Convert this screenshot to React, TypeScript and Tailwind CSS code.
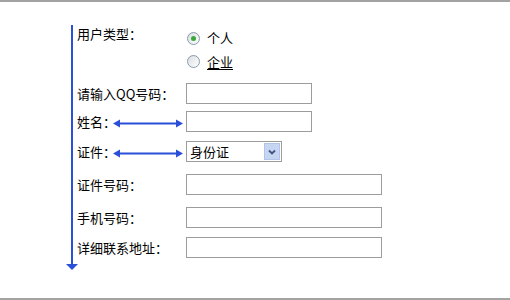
import React from 'react';

const font = { fontFamily: '"Noto Sans CJK SC", "Noto Sans", sans-serif' };

function HArrow() {
  // double-headed annotation arrow between label and field
  return (
    <svg width="70" height="9" viewBox="0 0 70 9" className="-ml-[3px] translate-y-[2px]">
      <line x1="5" y1="4.5" x2="65" y2="4.5" stroke="#2a4fd8" strokeWidth="2" />
      <polygon points="0,4.5 7,0.5 7,8.5" fill="#2a4fd8" />
      <polygon points="70,4.5 63,0.5 63,8.5" fill="#2a4fd8" />
    </svg>
  );
}

function Radio({ checked }: { checked?: boolean }) {
  return (
    <span className="ml-[1px] w-[13px] h-[13px] rounded-full border border-[#8a9aab] bg-gradient-to-br from-[#d9dde2] to-[#ffffff] flex items-center justify-center">
      {checked && <span className="w-[5px] h-[5px] rounded-full bg-[#3aa83a]" />}
    </span>
  );
}

function TextInput({ wide }: { wide?: boolean }) {
  return (
    <div
      className={
        (wide ? 'w-[196px]' : 'w-[126px]') +
        ' h-[21px] border border-[#9c9c9c] bg-white'
      }
    />
  );
}

function Row({ label, children, arrow, className }: { label: string; children: React.ReactNode; arrow?: boolean; className?: string }) {
  return (
    <div className={'flex items-center h-[21px] ' + (className ?? '')}>
      <div className="w-[109px] flex items-center">
        <span className="leading-[14px]">{label}</span>
        {arrow && <HArrow />}
      </div>
      {children}
    </div>
  );
}

export default function App() {
  return (
    <div
      className="relative w-[510px] h-[300px] bg-white border-t-2 border-b-2 border-[#a3a3a3] text-[13px] text-black"
      style={font}
    >
      {/* vertical annotation arrow */}
      <svg width="16" height="246" viewBox="0 0 16 246" className="absolute left-[64px] top-[23px]">
        <line x1="8" y1="0" x2="8" y2="241" stroke="#2a4fd8" strokeWidth="2" />
        <polygon points="2,239 14,239 8,245" fill="#2a4fd8" />
      </svg>

      <div className="pl-[77px] pt-[24px]">
        <div className="flex">
          <div className="w-[109px] pt-[1px] leading-[14px]">用户类型：</div>
          <div className="flex flex-col">
            <label className="h-[24px] flex items-center gap-[7px]">
              <Radio checked />
              <span>个人</span>
            </label>
            <label className="h-[23px] flex items-center gap-[7px]">
              <Radio />
              <span className="underline underline-offset-2">企业</span>
            </label>
          </div>
        </div>

        <Row label="请输入QQ号码：" className="mt-[10px]">
          <TextInput />
        </Row>
        <Row label="姓名：" arrow className="mt-[7px]">
          <TextInput />
        </Row>
        <Row label="证件：" arrow className="mt-[9px]">
          <div className="w-[96px] h-[21px] border border-[#9c9c9c] bg-white flex items-center">
            <span className="flex-1 pl-[3px] leading-[14px]">身份证</span>
            <span className="w-[16px] h-[17px] mr-[1px] bg-[#c6d5f1] border border-[#b3c4e6] flex items-center justify-center">
              <svg width="8" height="6" viewBox="0 0 8 6">
                <polyline points="1,1.5 4,4.5 7,1.5" fill="none" stroke="#3e5584" strokeWidth="1.8" />
              </svg>
            </span>
          </div>
        </Row>
        <Row label="证件号码：" className="mt-[12px]">
          <TextInput wide />
        </Row>
        <Row label="手机号码：" className="mt-[12px]">
          <TextInput wide />
        </Row>
        <Row label="详细联系地址：" className="mt-[9px]">
          <TextInput wide />
        </Row>
      </div>
    </div>
  );
}
